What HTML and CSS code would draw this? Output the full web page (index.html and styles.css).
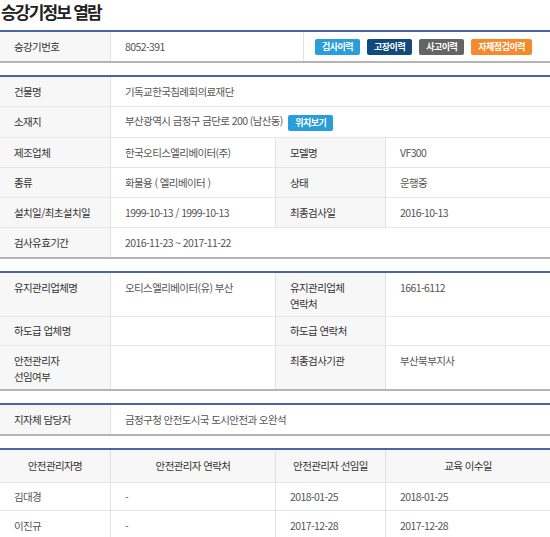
FILE: index.html
```html
<!DOCTYPE html>
<html lang="ko">
<head>
<meta charset="utf-8">
<title>승강기정보 열람</title>
<link rel="stylesheet" href="styles.css">
</head>
<body>
<h1 class="title">승강기정보 열람</h1>

<table class="info">
  <colgroup><col class="c20"><col class="c35"><col class="c45"></colgroup>
  <tr>
    <th>승강기번호</th>
    <td>8052-391</td>
    <td class="btns">
      <span class="btn sky">검사이력</span><span class="btn navy">고장이력</span><span class="btn gray">사고이력</span><span class="btn orange">자체점검이력</span>
    </td>
  </tr>
</table>

<table class="info">
  <colgroup><col class="c20"><col class="c30"><col class="c20"><col class="c30"></colgroup>
  <tr><th>건물명</th><td colspan="3">기독교한국침례회의료재단</td></tr>
  <tr class="r31"><th>소재지</th><td colspan="3">부산광역시 금정구 금단로 200 (남산동) <span class="btn sky loc">위치보기</span></td></tr>
  <tr><th>제조업체</th><td>한국오티스엘리베이터(주)</td><th>모델명</th><td>VF300</td></tr>
  <tr><th>종류</th><td>화물용 ( 엘리베이터 )</td><th>상태</th><td>운행중</td></tr>
  <tr><th>설치일/최초설치일</th><td>1999-10-13 / 1999-10-13</td><th>최종검사일</th><td>2016-10-13</td></tr>
  <tr><th>검사유효기간</th><td colspan="3">2016-11-23 ~ 2017-11-22</td></tr>
</table>

<table class="info top">
  <colgroup><col class="c20"><col class="c30"><col class="c20"><col class="c30"></colgroup>
  <tr class="tall"><th>유지관리업체명</th><td>오티스엘리베이터(유) 부산</td><th>유지관리업체<br>연락처</th><td>1661-6112</td></tr>
  <tr class="short"><th>하도급 업체명</th><td></td><th>하도급 연락처</th><td></td></tr>
  <tr class="tall"><th>안전관리자<br>선임여부</th><td></td><th>최종검사기관</th><td>부산북부지사</td></tr>
</table>

<table class="info">
  <colgroup><col class="c20"><col class="c30"><col class="c20"><col class="c30"></colgroup>
  <tr><th>지자체 담당자</th><td colspan="3">금정구청 안전도시국 도시안전과 오완석</td></tr>
</table>

<table class="info list">
  <colgroup><col class="c20"><col class="c30"><col class="c20"><col class="c30"></colgroup>
  <tr class="head"><th>안전관리자명</th><th>안전관리자 연락처</th><th>안전관리자 선임일</th><th>교육 이수일</th></tr>
  <tr class="r28"><td>김대경</td><td>-</td><td>2018-01-25</td><td>2018-01-25</td></tr>
  <tr><td>이진규</td><td>-</td><td>2017-12-28</td><td>2017-12-28</td></tr>
</table>
</body>
</html>
```

FILE: styles.css
```css
html, body {
  margin: 0;
  padding: 0;
  background: #fff;
}
body {
  font-family: "Noto Sans CJK KR", "Noto Sans", sans-serif;
  color: #555;
  font-size: 10.5px;
  letter-spacing: -0.6px;
}
.title {
  margin: 0;
  height: 28px;
  padding-top: 2px;
  font-size: 17px;
  line-height: 20px;
  font-weight: bold;
  color: #222;
  letter-spacing: -1.8px;
  padding-left: 1px;
}
.info {
  width: 100%;
  table-layout: fixed;
  border-collapse: separate;
  border-spacing: 0;
  border-top: 2px solid #4766a3;
  border-bottom: 2px solid #b4b4b4;
  margin-bottom: 12px;
}
.c20 { width: 20%; }
.c30 { width: 30%; }
.c35 { width: 35%; }
.c45 { width: 45%; }
.info th, .info td {
  height: 29px;
  padding: 0 14px;
  text-align: left;
  font-weight: normal;
  border-bottom: 1px solid #e6e6e6;
  border-left: 1px solid #e2e2e2;
  line-height: 16px;
  white-space: nowrap;
}
.info tr:last-child th, .info tr:last-child td {
  border-bottom: none;
}
.info th:first-child, .info td:first-child {
  border-left: none;
}
.info th {
  background: #f7f7f7;
  color: #333;
}
.info tr.r31 th, .info tr.r31 td { height: 30px; }
.info tr.r28 th, .info tr.r28 td { height: 27px; }
.top th, .top td {
  vertical-align: top;
}
.top tr.tall th, .top tr.tall td {
  height: 36px;
  padding-top: 7px;
  padding-bottom: 0;
}
.top tr.short th, .top tr.short td {
  height: 22px;
  padding-top: 6px;
  padding-bottom: 0;
}
.list .head th {
  height: 31px;
  text-align: center;
  padding-bottom: 1px;
}
.info .btns {
  text-align: right;
  padding: 0 18px 0 0;
  font-size: 0;
}
.btn {
  display: inline-block;
  height: 16px;
  line-height: 16px;
  padding: 0 7px;
  border-radius: 2px;
  color: #fff;
  font-size: 9px;
  font-weight: bold;
  letter-spacing: -0.5px;
  vertical-align: middle;
}
.btns .btn { margin-left: 7px; }
.loc { margin-left: 3px; }
.sky { background: #2a9ed9; }
.navy { background: #124a7d; }
.gray { background: #646464; }
.orange { background: #f48a2b; }
```
